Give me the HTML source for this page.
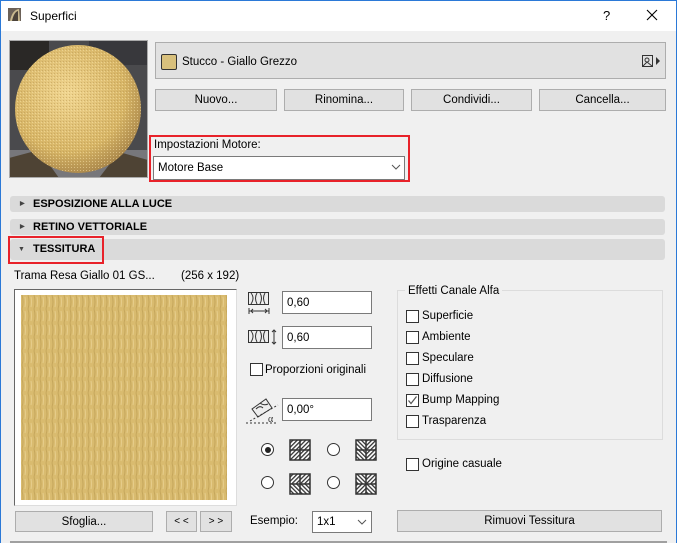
<!DOCTYPE html>
<html><head><meta charset="utf-8"><style>
*{box-sizing:border-box;margin:0;padding:0}
body{width:677px;height:543px;overflow:hidden;background:#f0f0f0;font-family:"Liberation Sans",sans-serif;font-size:11.5px;color:#000;position:relative}
.a{position:absolute}
.btn{position:absolute;background:#e1e1e1;border:1px solid #adadad;text-align:center;font-size:11.5px}
.inp{position:absolute;background:#fff;border:1px solid #7a7a7a;padding-left:4px;font-size:11.5px}
.cb{position:absolute;width:13px;height:13px;border:1px solid #333;background:#fff}
.lbl{position:absolute;font-size:11.5px;white-space:nowrap}
.bar{position:absolute;left:10px;width:655px;background:#dadada;border-radius:3px;font-weight:bold;font-size:11px}
.rad{position:absolute;width:13px;height:13px;border:1px solid #333;border-radius:50%;background:#fff}
</style></head><body>
<div class="a" style="left:0;top:0;width:677px;height:31px;background:#fff"></div>
<div class="a" style="left:0;top:0;width:1px;height:543px;background:#2b79d7"></div>
<div class="a" style="right:0;top:0;width:1px;height:543px;background:#2b79d7"></div>
<div class="a" style="left:0;top:0;width:677px;height:1px;background:#2b79d7"></div>
<svg class="a" style="left:8px;top:8px" width="13" height="13"><rect width="13" height="13" fill="#6b6158"/><path d="M2 13 Q4 2 11 1 L12 13 Z" fill="#c9b98f"/><path d="M4 13 Q6 4 10 3 L10 13Z" fill="#4a423a"/></svg>
<div class="lbl" style="left:30px;top:9px;font-size:12px">Superfici</div>
<div class="lbl" style="left:603px;top:8px;font-size:13px">?</div>
<svg class="a" style="left:646px;top:9px" width="12" height="12"><path d="M1 1L11 11M11 1L1 11" stroke="#000" stroke-width="1.1"/></svg>

<svg class="a" style="left:9px;top:40px" width="139" height="138">
<defs><radialGradient id="s" cx="0.42" cy="0.38" r="0.65"><stop offset="0" stop-color="#f0d590"/><stop offset="0.7" stop-color="#d7b566"/><stop offset="1" stop-color="#a8854a"/></radialGradient>
<pattern id="n" width="3" height="3" patternUnits="userSpaceOnUse"><rect width="3" height="3" fill="none"/><rect width="1" height="1" fill="#b8964f" opacity=".5"/><rect x="2" y="1" width="1" height="1" fill="#fbe8ae" opacity=".5"/></pattern></defs>
<rect width="139" height="138" fill="#4a4a4d"/>
<rect x="0" y="0" width="40" height="30" fill="#2a2826"/><rect x="80" y="0" width="59" height="25" fill="#38383c"/>
<rect x="0" y="110" width="139" height="28" fill="#77777b"/><path d="M0 118 L30 110 L50 138 L0 138Z" fill="#4e4334"/><path d="M90 138 L110 112 L139 120 L139 138Z" fill="#4e4334"/>
<rect x="0.5" y="0.5" width="138" height="137" fill="none" stroke="#aaa"/>
<ellipse cx="69" cy="69" rx="63" ry="64" fill="url(#s)"/><ellipse cx="69" cy="69" rx="63" ry="64" fill="url(#n)"/>
</svg>

<div class="a" style="left:155px;top:42px;width:511px;height:37px;background:#e1e1e1;border:1px solid #adadad"></div>
<div class="a" style="left:161px;top:54px;width:16px;height:16px;background:#d8c07c;border:1px solid #333;border-radius:2px"></div>
<div class="lbl" style="left:182px;top:56px">Stucco - Giallo Grezzo</div>
<svg class="a" style="left:642px;top:55px" width="20" height="13"><rect x="0.5" y="0.5" width="10" height="11" fill="none" stroke="#333"/><circle cx="5" cy="5" r="2" fill="none" stroke="#333"/><path d="M1 11 L5 7 L10 11" fill="none" stroke="#333"/><path d="M14 2 L18 6 L14 10Z" fill="#333"/></svg>

<div class="btn" style="left:155px;top:89px;width:122px;height:22px;line-height:21px">Nuovo...</div>
<div class="btn" style="left:284px;top:89px;width:120px;height:22px;line-height:21px">Rinomina...</div>
<div class="btn" style="left:411px;top:89px;width:121px;height:22px;line-height:21px">Condividi...</div>
<div class="btn" style="left:539px;top:89px;width:127px;height:22px;line-height:21px">Cancella...</div>

<div class="a" style="left:149px;top:135px;width:261px;height:47px;border:2px solid #e8222a"></div>
<div class="lbl" style="left:154px;top:139px">Impostazioni Motore:</div>
<div class="inp" style="left:153px;top:156px;width:252px;height:24px;line-height:23px">Motore Base</div>
<svg class="a" style="left:391px;top:164px" width="10" height="6"><path d="M1 1L5 5L9 1" fill="none" stroke="#555"/></svg>

<div class="bar" style="top:196px;height:16px;line-height:16px"><span style="position:absolute;left:10px;font-size:6px;top:0;color:#444">▶</span><span style="position:absolute;left:23px">ESPOSIZIONE ALLA LUCE</span></div>
<div class="bar" style="top:219px;height:16px;line-height:16px"><span style="position:absolute;left:10px;font-size:6px;top:0;color:#444">▶</span><span style="position:absolute;left:23px">RETINO VETTORIALE</span></div>
<div class="bar" style="top:239px;height:21px;line-height:21px"><span style="position:absolute;left:8px;font-size:7px;top:0;color:#444">▼</span><span style="position:absolute;left:23px">TESSITURA</span></div>
<div class="a" style="left:8px;top:236px;width:96px;height:28px;border:2px solid #e8222a"></div>

<div class="lbl" style="left:14px;top:270px">Trama Resa Giallo 01 GS...</div>
<div class="lbl" style="left:181px;top:270px">(256 x 192)</div>

<div class="a" style="left:14px;top:289px;width:223px;height:217px;background:#fff;border-left:1px solid #666;border-top:1px solid #666;border-right:1px solid #ddd;border-bottom:1px solid #ddd"></div>
<svg class="a" style="left:21px;top:295px" width="206" height="205">
<defs><pattern id="t" width="6" height="14" patternUnits="userSpaceOnUse"><rect width="6" height="14" fill="#d9bb6f"/><path d="M1 0 Q3 7 1 14" stroke="#b8984f" stroke-width="1" fill="none" opacity=".6"/><path d="M4 2 Q5 7 4 12" stroke="#ecd597" stroke-width="1" fill="none" opacity=".7"/></pattern></defs>
<rect width="206" height="205" fill="url(#t)"/></svg>

<div class="btn" style="left:15px;top:511px;width:138px;height:21px;line-height:20px">Sfoglia...</div>
<div class="btn" style="left:166px;top:511px;width:31px;height:21px;line-height:20px;font-size:10px">&lt; &lt;</div>
<div class="btn" style="left:200px;top:511px;width:32px;height:21px;line-height:20px;font-size:10px">&gt; &gt;</div>

<svg class="a" style="left:247px;top:291px" width="24" height="24" fill="none" stroke="#333"><rect x="1.5" y="1.5" width="20" height="12" fill="#eee"/><path d="M4 2Q8 7 4 13M10 2Q7 7 10 13M13 2Q16 7 13 13M18 2Q15 7 18 13"/><path d="M2 20H22M2 17V23M22 17V23M4 20l2-2M4 20l2 2M20 20l-2-2M20 20l-2 2"/></svg>
<svg class="a" style="left:247px;top:328px" width="30" height="18" fill="none" stroke="#333"><rect x="1.5" y="2.5" width="20" height="12" fill="#eee"/><path d="M4 3Q8 8 4 14M10 3Q7 8 10 14M13 3Q16 8 13 14M18 3Q15 8 18 14"/><path d="M27 2V16M25 4l2-2 2 2M25 14l2 2 2-2"/></svg>
<div class="cb" style="left:250px;top:363px"></div>
<div class="lbl" style="left:265px;top:364px">Proporzioni originali</div>
<svg class="a" style="left:244px;top:395px" width="36" height="30" fill="none" stroke="#333"><path d="M8 14 L22 4 L28 13 L14 22Z" fill="#eee"/><path d="M12 14Q16 10 19 13M16 8Q20 11 24 9"/><path d="M2 28H32" stroke-dasharray="2 2"/><path d="M6 26L34 10" stroke-dasharray="2 2"/><text x="24" y="27" font-size="10" fill="#333" stroke="none" font-family="Liberation Serif">α</text></svg>

<div class="inp" style="left:282px;top:291px;width:90px;height:23px;line-height:22px">0,60</div>
<div class="inp" style="left:282px;top:326px;width:90px;height:23px;line-height:22px">0,60</div>
<div class="inp" style="left:282px;top:398px;width:90px;height:23px;line-height:22px">0,00°</div>

<div class="rad" style="left:261px;top:443px"><div style="position:absolute;left:2.5px;top:2.5px;width:6px;height:6px;border-radius:50%;background:#222"></div></div>
<div class="rad" style="left:327px;top:443px"></div>
<div class="rad" style="left:261px;top:476px"></div>
<div class="rad" style="left:327px;top:476px"></div>
<svg width="0" height="0" style="position:absolute"><defs>
<pattern id="h1" width="3" height="3" patternUnits="userSpaceOnUse" patternTransform="rotate(45)"><rect width="3" height="3" fill="#fff"/><rect width="1.3" height="3" fill="#333"/></pattern>
<pattern id="h2" width="3" height="3" patternUnits="userSpaceOnUse" patternTransform="rotate(-45)"><rect width="3" height="3" fill="#fff"/><rect width="1.3" height="3" fill="#333"/></pattern></defs></svg>
<svg class="a" style="left:289px;top:439px" width="22" height="22"><rect x="1" y="1" width="10" height="10" fill="url(#h1)"/><rect x="11" y="1" width="10" height="10" fill="url(#h1)"/><rect x="1" y="11" width="10" height="10" fill="url(#h1)"/><rect x="11" y="11" width="10" height="10" fill="url(#h1)"/><path d="M1 1H21V21H1ZM11 1V21M1 11H21" fill="none" stroke="#333" stroke-width="1.5"/></svg>
<svg class="a" style="left:355px;top:439px" width="22" height="22"><rect x="1" y="1" width="10" height="10" fill="url(#h2)"/><rect x="11" y="1" width="10" height="10" fill="url(#h1)"/><rect x="1" y="11" width="10" height="10" fill="url(#h2)"/><rect x="11" y="11" width="10" height="10" fill="url(#h1)"/><path d="M1 1H21V21H1ZM11 1V21M1 11H21" fill="none" stroke="#333" stroke-width="1.5"/></svg>
<svg class="a" style="left:289px;top:473px" width="22" height="22"><rect x="1" y="1" width="10" height="10" fill="url(#h1)"/><rect x="11" y="1" width="10" height="10" fill="url(#h1)"/><rect x="1" y="11" width="10" height="10" fill="url(#h2)"/><rect x="11" y="11" width="10" height="10" fill="url(#h2)"/><path d="M1 1H21V21H1ZM11 1V21M1 11H21" fill="none" stroke="#333" stroke-width="1.5"/></svg>
<svg class="a" style="left:355px;top:473px" width="22" height="22"><rect x="1" y="1" width="10" height="10" fill="url(#h2)"/><rect x="11" y="1" width="10" height="10" fill="url(#h1)"/><rect x="1" y="11" width="10" height="10" fill="url(#h1)"/><rect x="11" y="11" width="10" height="10" fill="url(#h2)"/><path d="M1 1H21V21H1ZM11 1V21M1 11H21" fill="none" stroke="#333" stroke-width="1.5"/></svg>

<div class="lbl" style="left:250px;top:515px">Esempio:</div>
<div class="inp" style="left:312px;top:511px;width:60px;height:22px;line-height:21px">1x1</div>
<svg class="a" style="left:357px;top:519px" width="10" height="6"><path d="M1 1L5 5L9 1" fill="none" stroke="#555"/></svg>

<div class="a" style="left:397px;top:290px;width:266px;height:150px;border:1px solid #dcdcdc"></div>
<div class="lbl" style="left:405px;top:285px;background:#f0f0f0;padding:0 3px">Effetti Canale Alfa</div>
<div class="cb" style="left:406px;top:310px"></div><div class="lbl" style="left:422px;top:310px">Superficie</div>
<div class="cb" style="left:406px;top:331px"></div><div class="lbl" style="left:422px;top:331px">Ambiente</div>
<div class="cb" style="left:406px;top:352px"></div><div class="lbl" style="left:422px;top:352px">Speculare</div>
<div class="cb" style="left:406px;top:373px"></div><div class="lbl" style="left:422px;top:373px">Diffusione</div>
<div class="cb" style="left:406px;top:394px"><svg width="11" height="11" style="position:absolute;left:0;top:0"><path d="M1.5 5.5L4 8.5L9.5 1.5" fill="none" stroke="#555" stroke-width="1.2"/></svg></div><div class="lbl" style="left:422px;top:394px">Bump Mapping</div>
<div class="cb" style="left:406px;top:415px"></div><div class="lbl" style="left:422px;top:415px">Trasparenza</div>
<div class="cb" style="left:406px;top:458px"></div><div class="lbl" style="left:422px;top:458px">Origine casuale</div>
<div class="btn" style="left:397px;top:510px;width:265px;height:22px;line-height:21px">Rimuovi Tessitura</div>
<div class="a" style="left:10px;top:541px;width:657px;height:2px;background:#a0a0a0"></div>
</body></html>
